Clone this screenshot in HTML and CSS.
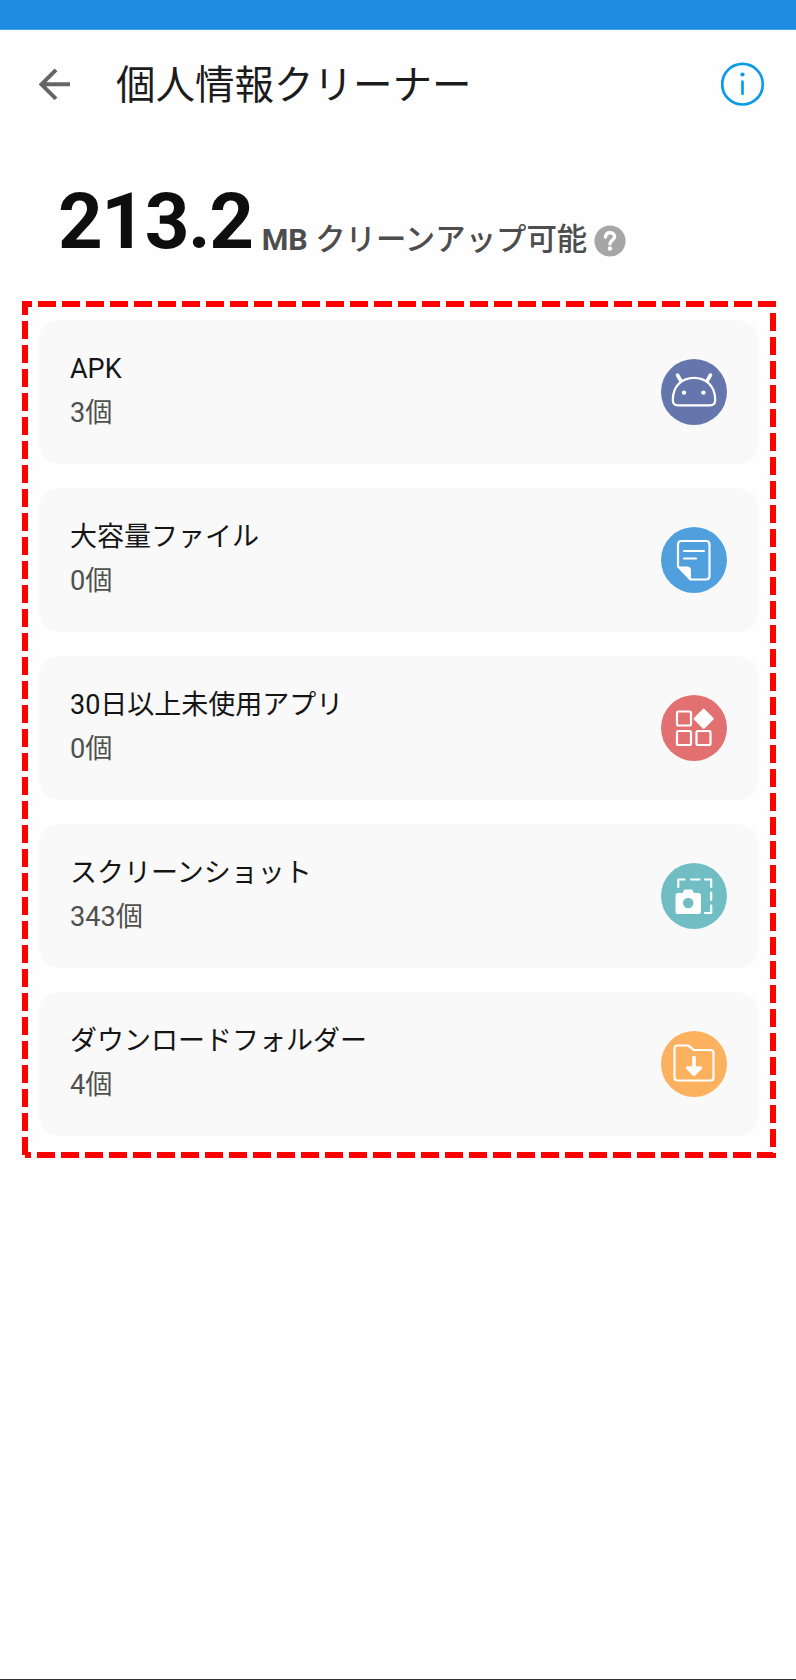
FILE: index.html
```html
<!DOCTYPE html>
<html lang="ja">
<head>
<meta charset="utf-8">
<title>個人情報クリーナー</title>
<link rel="stylesheet" href="styles.css">
</head>
<body>
<div class="screen">
  <div class="status"></div>
  <header class="bar">
    <svg class="back" width="32" height="32" viewBox="0 0 32 32"><path d="M31 16.300H3M17 1.800L2.500 16.300L17 30.800"/></svg>
    <h1 class="title">個人情報クリーナー</h1>
    <svg class="info" width="44" height="44" viewBox="0 0 44 44"><circle cx="21.500" cy="22.200" r="20.300"/><path d="M21.500 19.700V31.700"/><circle class="dot" cx="21.500" cy="12.500" r="2.100"/></svg>
  </header>
  <section class="summary">
    <span class="size">213.2</span>
    <span class="label"><span class="unit">MB</span> クリーンアップ可能</span>
    <svg class="help" width="32" height="32" viewBox="0 0 32 32"><circle cx="16" cy="16" r="15.600"/><path d="M11.500 12C11.700 9 13.600 7.800 16 7.800C18.500 7.800 20.500 9.300 20.500 11.800C20.500 15 16 15.200 16 18.800"/><circle class="dot" cx="16" cy="23.500" r="2.200"/></svg>
  </section>
  <main class="list">
    <article class="card">
      <div class="text"><h2 class="name">APK</h2><p class="count">3個</p></div>
      <svg class="icon apk" viewBox="0 0 66 66"><path d="M11.800 41C11.800 27 21 18.800 33 18.800S54.200 27 54.200 41Q54.200 46.300 49 46.300H17Q11.800 46.300 11.800 41Z"/><path class="thick" d="M20 22L16.500 16M46 22L49.500 16"/><circle class="solid" cx="23" cy="33.600" r="2.200"/><circle class="solid" cx="42.400" cy="33.600" r="2.200"/></svg>
    </article>
    <article class="card">
      <div class="text"><h2 class="name">大容量ファイル</h2><p class="count">0個</p></div>
      <svg class="icon file" viewBox="0 0 66 66"><path d="M17 39.500V17.500Q17 14 20.500 14H45Q48.500 14 48.500 17.500V49Q48.500 52.500 45 52.500H29.500Z"/><path d="M23 24H43M23 31.500H35"/><path class="solid" d="M16.500 39.500H26Q30 39.500 30 43.500V53Z"/></svg>
    </article>
    <article class="card">
      <div class="text"><h2 class="name">30日以上未使用アプリ</h2><p class="count">0個</p></div>
      <svg class="icon apps" viewBox="0 0 66 66"><rect x="16" y="16.500" width="14" height="14" rx="1.500"/><rect x="16" y="36" width="14" height="14" rx="1.500"/><rect x="35.500" y="36" width="14" height="14" rx="1.500"/><rect class="solid" x="35.200" y="16.200" width="15" height="15" rx="1.500" transform="rotate(45 42.700 23.700)"/></svg>
    </article>
    <article class="card">
      <div class="text"><h2 class="name">スクリーンショット</h2><p class="count">343個</p></div>
      <svg class="icon shot" viewBox="0 0 66 66"><path d="M17.300 24V16.500H23.500M30 16.500H38.500M44 16.500H50.200V24M50.200 29.500V37M50.200 42.500V50H44"/><path class="solid" fill-rule="evenodd" d="M17 30H21.500L23.500 26.500H31L33 30H37.500Q40 30 40 32.500V48.500Q40 51 37.500 51H17Q14.500 51 14.500 48.500V32.500Q14.500 30 17 30ZM27.200 34.800A5.200 5.200 0 1 0 27.200 45.200A5.200 5.200 0 1 0 27.200 34.800Z"/></svg>
    </article>
    <article class="card">
      <div class="text"><h2 class="name">ダウンロードフォルダー</h2><p class="count">4個</p></div>
      <svg class="icon folder" viewBox="0 0 66 66"><path d="M16.500 14.500H27L33 19H49.500Q52.500 19 52.500 22V47Q52.500 49.500 49.500 49.500H16.500Q13.500 49.500 13.500 46.500V17.500Q13.500 14.500 16.500 14.500Z"/><path class="shaft" d="M33 26.500V38"/><path class="solid" d="M26 35.200H40Q42 36.300 40.600 38L34.500 44.200Q33 45.600 31.500 44.200L25.400 38Q24 36.300 26 35.200Z"/></svg>
    </article>
  </main>
  <svg class="outline" width="796" height="1680" viewBox="0 0 796 1680"><path d="M25 1155V304H773V1155H25"/></svg>
</div>
</body>
</html>
```
FILE: styles.css
```css
* { box-sizing: border-box; }
body { margin: 0; }
.screen {
  position: relative;
  width: 796px;
  height: 1680px;
  overflow: hidden;
  background: #fefefe;
  border-bottom: 1px solid #333;
  font-family: Roboto, "Noto Sans CJK JP", sans-serif;
}
.status { height: 30px; background: #1e8ce3; border-bottom: 1px solid #4da7eb; }
.bar { display: flex; align-items: center; height: 108px; padding: 0 31px 0 38.500px; }
.back { fill: none; stroke: #666; stroke-width: 4; }
.title { margin: 0 auto 0 45.500px; padding-top: 4px; font-size: 39.500px; line-height: 58px; font-weight: 400; color: #1c1c1c; }
.info { fill: none; stroke: #0a9be9; stroke-width: 2.700; stroke-linecap: round; }
.info .dot { fill: #0a9be9; stroke: none; }
.summary { display: flex; align-items: flex-start; height: 182px; padding-left: 58px; }
.size { margin-top: 38px; font-size: 78px; line-height: 92px; font-weight: 700; letter-spacing: -1.400px; color: #0e0e0e; }
.label { margin: 80px 0 0 9px; font-size: 30.400px; line-height: 44px; font-weight: 500; color: #4d4d4d; }
.unit { font-weight: 700; }
.help { margin: 87px 0 0 7px; fill: none; stroke: #fff; stroke-width: 3.400; stroke-linecap: round; }
.help circle { fill: #a6a6a6; stroke: none; }
.help .dot { fill: #fff; }
.list { display: flex; flex-direction: column; gap: 24px; padding: 0 38px 0 39px; }
.card {
  display: flex;
  align-items: center;
  justify-content: space-between;
  height: 144px;
  padding: 0 31px;
  border-radius: 20px;
  background: #f9f9f9;
}
.text { padding-bottom: 2px; }
.name, .count { margin: 0; font-size: 27px; line-height: 44px; font-weight: 400; }
.name { color: #151515; }
.count { font-size: 27.200px; color: #505050; }
.icon { width: 66px; height: 66px; border-radius: 50%; fill: none; stroke: #fff; stroke-width: 2.200; stroke-linecap: round; stroke-linejoin: round; }
.icon .solid { fill: #fff; stroke: none; }
.icon .thick { stroke-width: 3.500; }
.icon .shaft { stroke-width: 3.600; }
.apk { background: #6576ac; }
.file { background: #51a0de; }
.apps { background: #e37070; }
.shot { background: #70bec4; }
.folder { background: #fbb15d; }
.outline { position: absolute; inset: 0; fill: none; stroke: #f00; stroke-width: 6; stroke-dasharray: 18 6; }
```
